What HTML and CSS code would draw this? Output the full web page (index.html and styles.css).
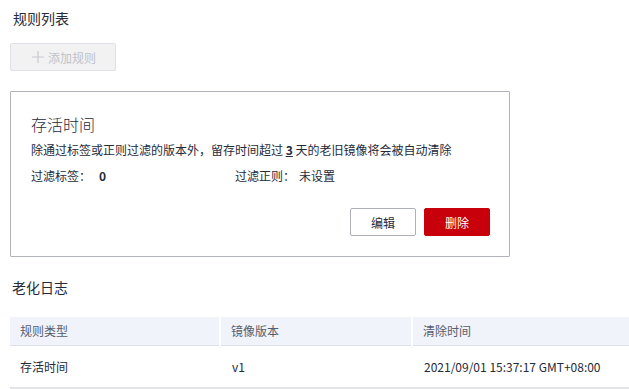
FILE: index.html
```html
<!DOCTYPE html>
<html lang="zh">
<head>
<meta charset="utf-8">
<link rel="stylesheet" href="styles.css">
</head>
<body>
<div class="page">
  <h2 class="section-title first">规则列表</h2>
  <button class="btn-add" disabled>
    <svg class="plus" width="12" height="12" viewBox="0 0 12 12"><path d="M6 0v12M0 6h12" stroke="#c8cad0" stroke-width="1.2" fill="none"/></svg>
    <span>添加规则</span>
  </button>

  <div class="card">
    <div class="card-title">存活时间</div>
    <div class="card-desc">除通过标签或正则过滤的版本外，留存时间超过 <b class="num">3</b> 天的老旧镜像将会被自动清除</div>
    <div class="card-meta">
      <div class="meta-item"><span class="meta-label">过滤标签：</span><b class="meta-val">0</b></div>
      <div class="meta-item"><span class="meta-label">过滤正则：</span><span>未设置</span></div>
    </div>
    <div class="card-actions">
      <button class="btn btn-default">编辑</button>
      <button class="btn btn-danger">删除</button>
    </div>
  </div>

  <h2 class="section-title second">老化日志</h2>
  <table class="log-table">
    <thead>
      <tr><th class="c1">规则类型</th><th class="c2">镜像版本</th><th class="c3">清除时间</th></tr>
    </thead>
    <tbody>
      <tr><td>存活时间</td><td>v1</td><td>2021/09/01 15:37:17 GMT+08:00</td></tr>
    </tbody>
  </table>
</div>
</body>
</html>
```

FILE: styles.css
```css
* { box-sizing: border-box; }
html, body { margin: 0; padding: 0; background: #fff; }
body {
  font-family: "Noto Sans CJK SC", "Noto Sans", "Liberation Sans", sans-serif;
  color: #252b3a;
  font-size: 12px;
  overflow: hidden;
}
.page {
  padding: 0 0 0 10px;
  width: 660px;
}
.section-title {
  font-size: 14px;
  font-weight: normal;
  line-height: 20px;
  margin: 0;
  padding-left: 3px;
  color: #252b3a;
}
.section-title.first { padding-top: 8px; }
.section-title.second { padding-left: 2px; margin-top: 20px; }

.btn-add {
  display: flex;
  align-items: center;
  gap: 4px;
  margin-top: 15px;
  width: 106px;
  height: 28px;
  padding: 0 0 0 21px;
  background: #f2f2f3;
  border: 1px solid #dfe1e6;
  border-radius: 2px;
  color: #bfc2c9;
  font-family: inherit;
  font-size: 12px;
}
.plus { display: block; }

.card {
  margin-top: 20px;
  width: 500px;
  height: 166px;
  border: 1px solid #b1b4bb;
  border-radius: 1px;
  padding: 20px 19px 0 20px;
  display: flex;
  flex-direction: column;
}
.card-title {
  font-size: 16px;
  line-height: 24px;
  font-weight: 300;
}
.card-desc {
  margin-top: 4px;
  line-height: 20px;
}
.num {
  text-decoration: underline;
  font-weight: bold;
}
.card-meta {
  display: grid;
  grid-template-columns: 204px 1fr;
  margin-top: 6px;
  line-height: 20px;
}
.meta-label { margin-right: 8px; }
.meta-item:nth-child(2) .meta-label { margin-right: 4px; }
.meta-val { font-weight: bold; }
.card-actions {
  display: flex;
  justify-content: flex-end;
  gap: 8px;
  margin-top: 22px;
}
.btn {
  width: 66px;
  height: 28px;
  border-radius: 2px;
  font-family: inherit;
  font-size: 12px;
  padding: 0;
}
.btn-default {
  background: #fff;
  border: 1px solid #adb0b8;
  color: #252b3a;
}
.btn-danger {
  background: #c7000b;
  border: 1px solid #c7000b;
  color: #fff;
}

.log-table {
  margin-top: 20px;
  width: 640px;
  border-collapse: collapse;
  table-layout: fixed;
}
.log-table th {
  background: #f0f3f9;
  color: #575d6c;
  font-weight: normal;
  text-align: left;
  height: 28px;
  padding: 0 10px;
  border-bottom: 1px solid #dfe1e6;
  border-left: 2px solid #fff;
}
.log-table th.c1 { border-left: none; width: 210px; }
.log-table th.c2 { width: 192px; }
.log-table td {
  height: 43px;
  padding: 0 10px;
  border-bottom: 2px solid #e2e4e8;
  color: #252b3a;
}
.log-table td + td { padding-left: 12px; }
```
